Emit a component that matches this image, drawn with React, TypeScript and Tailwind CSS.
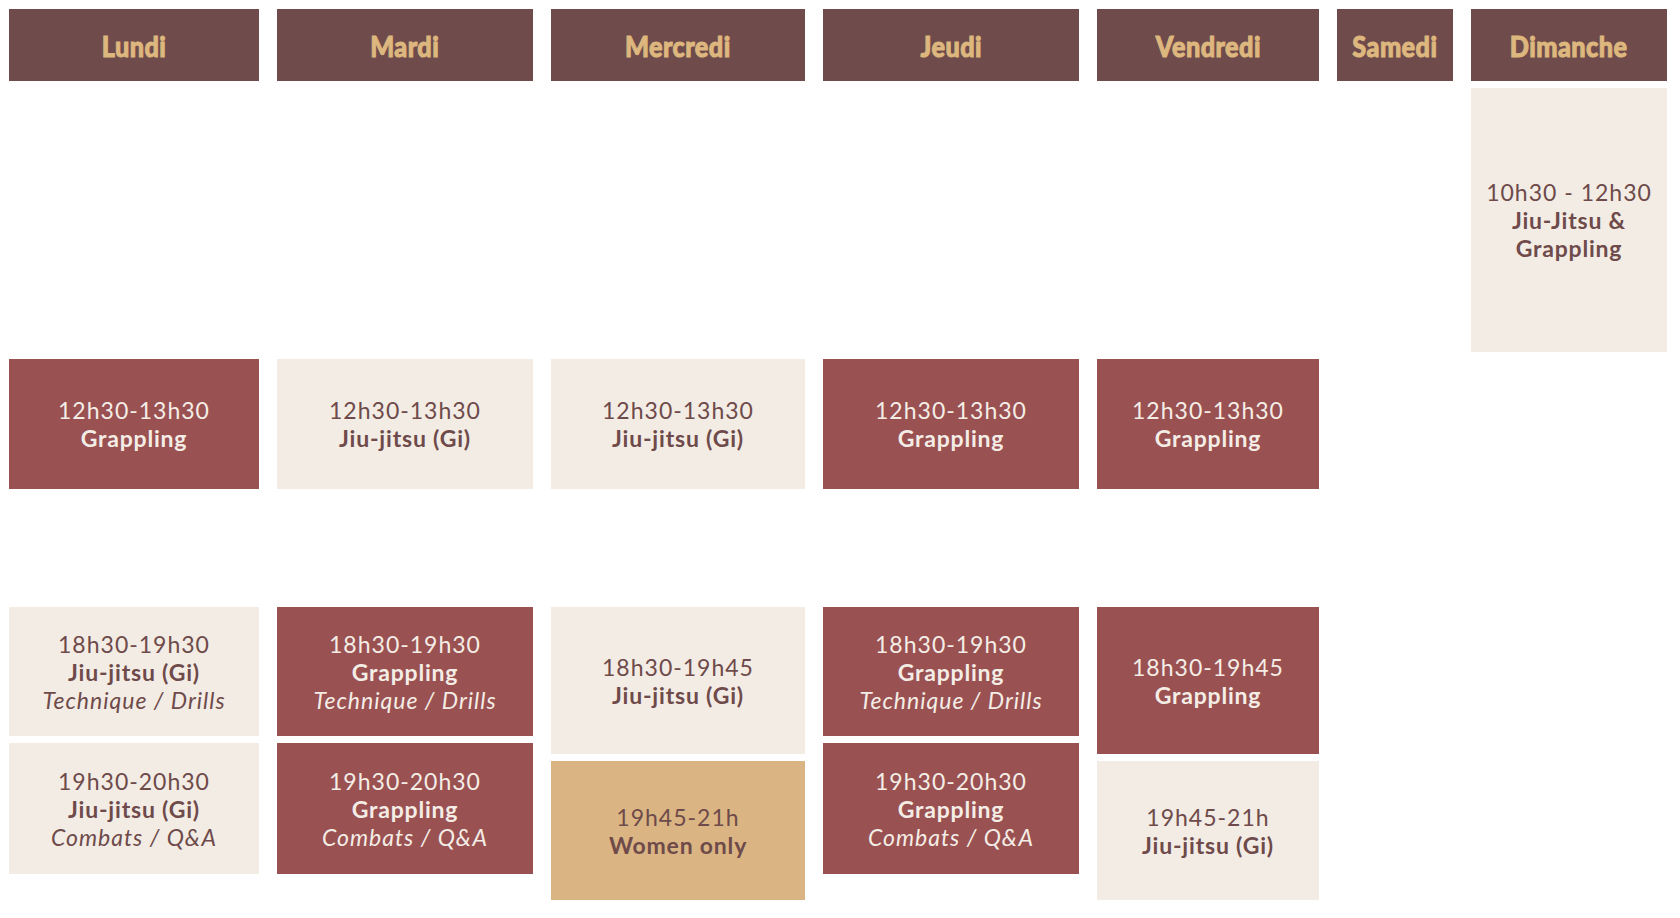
import React from "react";

type Tone = "red" | "cream" | "gold";

const toneCls: Record<Tone, string> = {
  red: "bg-[#9a5152] text-[#f4ede6]",
  cream: "bg-[#f3ece4] text-[#6e4a4a]",
  gold: "bg-[#dab583] text-[#6e4a4a]",
};

function Cell({
  tone,
  pos,
  time,
  name,
  sub,
}: {
  tone: Tone;
  pos: string;
  time: string;
  name: React.ReactNode;
  sub?: string;
}) {
  return (
    <div
      className={`${pos} ${toneCls[tone]} flex flex-col items-center justify-center text-center text-[23px] leading-[28px] px-2`}
    >
      <div className="font-normal tracking-[1px]">{time}</div>
      <div className="font-bold tracking-[0.8px]">{name}</div>
      {sub && <div className="italic tracking-[1px]">{sub}</div>}
    </div>
  );
}

function Head({ label, pos }: { label: string; pos: string }) {
  return (
    <div className={`${pos} bg-[#6f4b4b] text-[#ddb77e] flex items-center justify-center`}>
      <span
        className="inline-block font-black text-[29px] leading-none tracking-[0.5px] scale-x-[0.87] [-webkit-text-stroke:1px_#ddb77e]"
        style={{ fontFamily: "Lato, 'Liberation Sans', sans-serif" }}
      >
        {label}
      </span>
    </div>
  );
}

export default function App() {
  return (
    <div
      className="w-[1680px] h-[918px] bg-white pt-[9px] pl-[9px]"
      style={{ fontFamily: "Lato, 'Open Sans', sans-serif" }}
    >
      <div className="grid grid-cols-[250px_256px_254px_256px_222px_116px_196px] grid-rows-[72px_264px_130px_104px_129px_11px_113px_19px] gap-x-[18px] gap-y-[7px]">
        <Head label="Lundi" pos="col-start-1 row-start-1" />
        <Head label="Mardi" pos="col-start-2 row-start-1" />
        <Head label="Mercredi" pos="col-start-3 row-start-1" />
        <Head label="Jeudi" pos="col-start-4 row-start-1" />
        <Head label="Vendredi" pos="col-start-5 row-start-1" />
        <Head label="Samedi" pos="col-start-6 row-start-1" />
        <Head label="Dimanche" pos="col-start-7 row-start-1" />

        <Cell
          tone="cream"
          pos="col-start-7 row-start-2"
          time="10h30 - 12h30"
          name={
            <>
              Jiu-Jitsu &amp;
              <br />
              Grappling
            </>
          }
        />

        <Cell tone="red" pos="col-start-1 row-start-3" time="12h30-13h30" name="Grappling" />
        <Cell tone="cream" pos="col-start-2 row-start-3" time="12h30-13h30" name="Jiu-jitsu (Gi)" />
        <Cell tone="cream" pos="col-start-3 row-start-3" time="12h30-13h30" name="Jiu-jitsu (Gi)" />
        <Cell tone="red" pos="col-start-4 row-start-3" time="12h30-13h30" name="Grappling" />
        <Cell tone="red" pos="col-start-5 row-start-3" time="12h30-13h30" name="Grappling" />

        <Cell
          tone="cream"
          pos="col-start-1 row-start-5"
          time="18h30-19h30"
          name="Jiu-jitsu (Gi)"
          sub="Technique / Drills"
        />
        <Cell
          tone="cream"
          pos="col-start-1 row-start-6 row-span-2"
          time="19h30-20h30"
          name="Jiu-jitsu (Gi)"
          sub="Combats / Q&A"
        />

        <Cell
          tone="red"
          pos="col-start-2 row-start-5"
          time="18h30-19h30"
          name="Grappling"
          sub="Technique / Drills"
        />
        <Cell
          tone="red"
          pos="col-start-2 row-start-6 row-span-2"
          time="19h30-20h30"
          name="Grappling"
          sub="Combats / Q&A"
        />

        <Cell
          tone="cream"
          pos="col-start-3 row-start-5 row-span-2"
          time="18h30-19h45"
          name="Jiu-jitsu (Gi)"
        />
        <Cell
          tone="gold"
          pos="col-start-3 row-start-7 row-span-2"
          time="19h45-21h"
          name="Women only"
        />

        <Cell
          tone="red"
          pos="col-start-4 row-start-5"
          time="18h30-19h30"
          name="Grappling"
          sub="Technique / Drills"
        />
        <Cell
          tone="red"
          pos="col-start-4 row-start-6 row-span-2"
          time="19h30-20h30"
          name="Grappling"
          sub="Combats / Q&A"
        />

        <Cell
          tone="red"
          pos="col-start-5 row-start-5 row-span-2"
          time="18h30-19h45"
          name="Grappling"
        />
        <Cell
          tone="cream"
          pos="col-start-5 row-start-7 row-span-2"
          time="19h45-21h"
          name="Jiu-jitsu (Gi)"
        />
      </div>
    </div>
  );
}
